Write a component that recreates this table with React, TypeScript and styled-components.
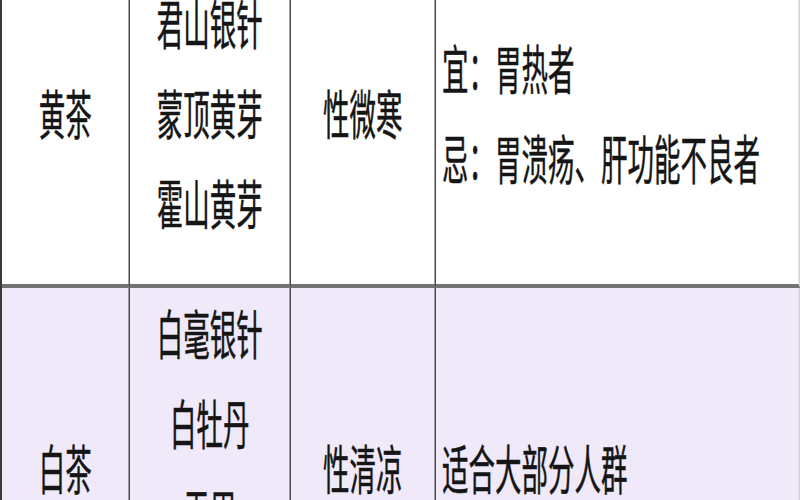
import styled, { createGlobalStyle } from "styled-components";

const GlobalStyle = createGlobalStyle`
  html, body {
    margin: 0;
    padding: 0;
    background: #ffffff;
  }
  body {
    font-family: "Noto Sans CJK SC", "Noto Sans", sans-serif;
  }
`;

// the screenshot is squeezed horizontally, so the table is laid out at
// double width and scaled back to 800px
const Viewport = styled.div`
  width: 800px;
  height: 500px;
  overflow: hidden;
`;

const Table = styled.div`
  width: 1600px;
  margin-top: -49px;
  transform: scaleX(0.5);
  transform-origin: left top;
  display: grid;
  grid-template-columns: 256px 322px 290px 1fr;
  grid-template-rows: 337px 373px;
  border-left: 4px solid #3a3a3a;
  box-sizing: border-box;
`;

const Cell = styled.div<{ $left?: boolean; $tint?: boolean; $last?: boolean }>`
  box-sizing: border-box;
  display: flex;
  flex-direction: column;
  justify-content: center;
  align-items: ${(p) => (p.$left ? "flex-start" : "center")};
  padding: 0 0 12px ${(p) => (p.$left ? "12px" : "0")};
  background: ${(p) => (p.$tint ? "#efe9fa" : "#ffffff")};
  border-right: ${(p) => (p.$last ? "3px solid #d4d4d4" : "3px solid #4a4a4a")};
  border-bottom: 4px solid #737373;
`;

const Line = styled.div`
  font-size: 53px;
  font-weight: 400;
  line-height: 90px;
  color: #151515;
  white-space: nowrap;
  -webkit-text-stroke: 0.5px #151515;
`;

const rows = [
  {
    name: "黄茶",
    kinds: ["君山银针", "蒙顶黄芽", "霍山黄芽"],
    nature: "性微寒",
    notes: ["宜：胃热者", "忌：胃溃疡、肝功能不良者"],
  },
  {
    name: "白茶",
    kinds: ["白毫银针", "白牡丹", "贡眉", "寿眉"],
    nature: "性清凉",
    notes: ["适合大部分人群"],
  },
];

export default function App() {
  return (
    <>
      <GlobalStyle />
      <Viewport>
        <Table>
          {rows.map((r, i) => {
            const tint = i === 1;
            return [
              <Cell key={`${i}-a`} $tint={tint}>
                <Line>{r.name}</Line>
              </Cell>,
              <Cell key={`${i}-b`} $tint={tint}>
                {r.kinds.map((k) => (
                  <Line key={k}>{k}</Line>
                ))}
              </Cell>,
              <Cell key={`${i}-c`} $tint={tint}>
                <Line>{r.nature}</Line>
              </Cell>,
              <Cell key={`${i}-d`} $tint={tint} $left $last>
                {r.notes.map((n) => (
                  <Line key={n}>{n}</Line>
                ))}
              </Cell>,
            ];
          })}
        </Table>
      </Viewport>
    </>
  );
}
